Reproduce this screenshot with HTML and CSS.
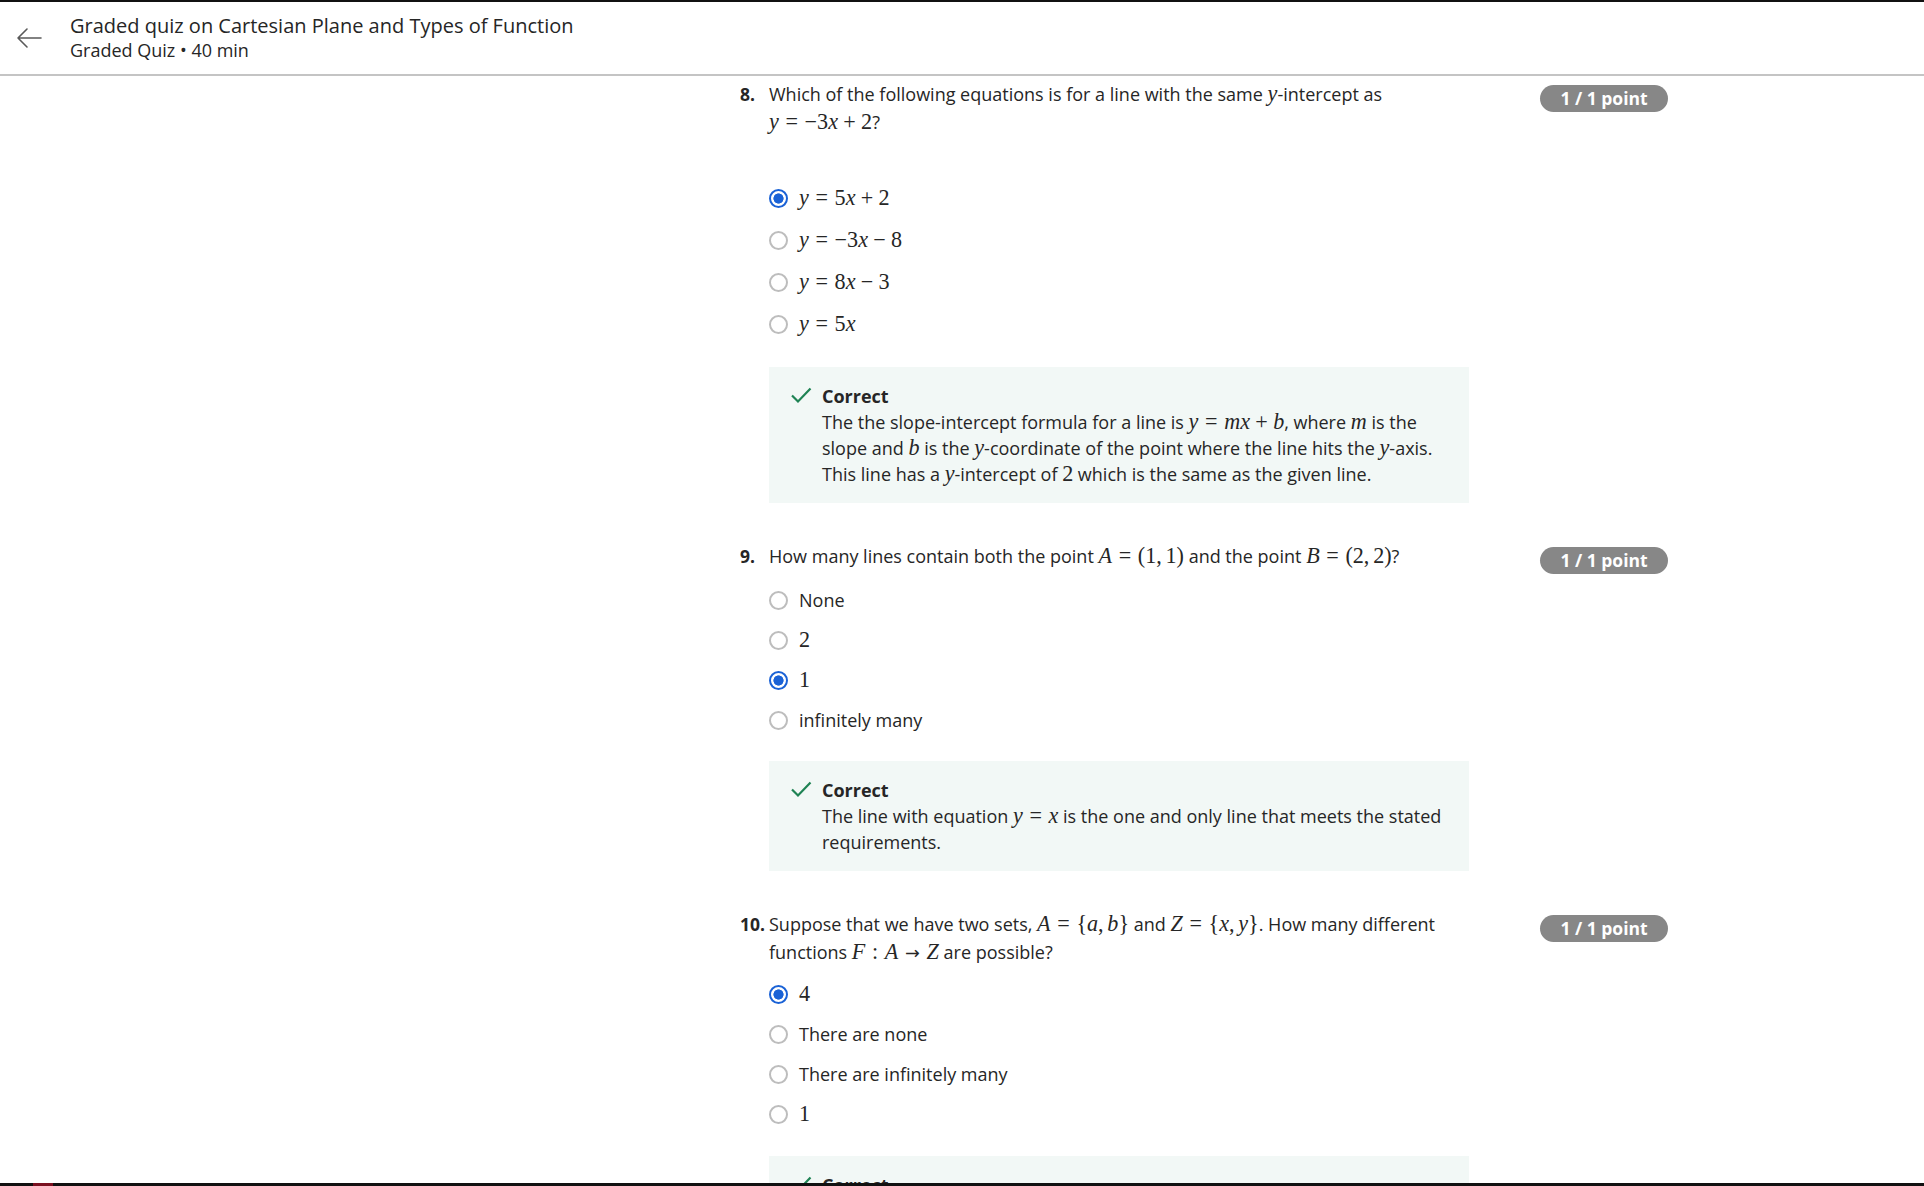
FILE: index.html
```html
<!DOCTYPE html>
<html lang="en">
<head>
<meta charset="utf-8">
<title>Graded quiz on Cartesian Plane and Types of Function</title>
<link rel="stylesheet" href="styles.css">
</head>
<body>
<header class="top">
  <svg class="back" width="26" height="22" viewBox="0 0 26 22" aria-hidden="true">
    <path d="M25 11 H2 M11 2 L2 11 L11 20" fill="none" stroke="#5a5a5a" stroke-width="1.6" stroke-linecap="round" stroke-linejoin="round"/>
  </svg>
  <div class="titles">
    <div class="title">Graded quiz on Cartesian Plane and Types of Function</div>
    <div class="sub">Graded Quiz • 40 min</div>
  </div>
</header>

<main class="quiz">
  <section class="q">
    <div class="q-num">8.</div>
    <div class="q-body">
      <p class="q-text">Which of the following equations is for a line with the same <span class="m"><i>y</i></span>-intercept as <span class="m"><i>y</i><b class="rel">=</b>−3<i>x</i><b class="bin">+</b>2</span>?</p>
      <div class="spacer"></div>
      <ul class="opts">
        <li class="opt tall"><span class="radio on"></span><span class="m"><i>y</i><b class="rel">=</b>5<i>x</i><b class="bin">+</b>2</span></li>
        <li class="opt tall"><span class="radio"></span><span class="m"><i>y</i><b class="rel">=</b>−3<i>x</i><b class="bin">−</b>8</span></li>
        <li class="opt tall"><span class="radio"></span><span class="m"><i>y</i><b class="rel">=</b>8<i>x</i><b class="bin">−</b>3</span></li>
        <li class="opt tall"><span class="radio"></span><span class="m"><i>y</i><b class="rel">=</b>5<i>x</i></span></li>
      </ul>
      <div class="fb">
        <svg class="check" width="22" height="22" viewBox="0 0 22 22" aria-hidden="true"><path d="M2 11.5 L8 17.5 L20.5 4.5" fill="none" stroke="#1f8354" stroke-width="2.2"/></svg>
        <div class="fb-text">
          <div class="fb-title">Correct</div>
          <p>The the slope-intercept formula for a line is <span class="m"><i>y</i><b class="rel">=</b><i>mx</i><b class="bin">+</b><i>b</i></span>, where <span class="m"><i>m</i></span> is the slope and <span class="m"><i>b</i></span> is the <span class="m"><i>y</i></span>-coordinate of the point where the line hits the <span class="m"><i>y</i></span>-axis. This line has a <span class="m"><i>y</i></span>-intercept of <span class="m">2</span> which is the same as the given line.</p>
        </div>
      </div>
    </div>
    <div class="badge">1 / 1 point</div>
  </section>

  <section class="q">
    <div class="q-num">9.</div>
    <div class="q-body">
      <p class="q-text">How many lines contain both the point <span class="m"><i>A</i><b class="rel">=</b>(1,<span class="thin"></span>1)</span> and the point <span class="m"><i>B</i><b class="rel">=</b>(2,<span class="thin"></span>2)</span>?</p>
      <ul class="opts opts-wide">
        <li class="opt"><span class="radio"></span><span>None</span></li>
        <li class="opt"><span class="radio"></span><span class="m">2</span></li>
        <li class="opt"><span class="radio on"></span><span class="m">1</span></li>
        <li class="opt"><span class="radio"></span><span>infinitely many</span></li>
      </ul>
      <div class="fb">
        <svg class="check" width="22" height="22" viewBox="0 0 22 22" aria-hidden="true"><path d="M2 11.5 L8 17.5 L20.5 4.5" fill="none" stroke="#1f8354" stroke-width="2.2"/></svg>
        <div class="fb-text">
          <div class="fb-title">Correct</div>
          <p>The line with equation <span class="m"><i>y</i><b class="rel">=</b><i>x</i></span> is the one and only line that meets the stated requirements.</p>
        </div>
      </div>
    </div>
    <div class="badge">1 / 1 point</div>
  </section>

  <section class="q q-last">
    <div class="q-num">10.</div>
    <div class="q-body">
      <p class="q-text">Suppose that we have two sets, <span class="m"><i>A</i><b class="rel">=</b>{<i>a</i>,<span class="thin"></span><i>b</i>}</span> and <span class="m"><i>Z</i><b class="rel">=</b>{<i>x</i>,<span class="thin"></span><i>y</i>}</span>. How many different functions <span class="m"><i>F</i><b class="rel">:</b><i>A</i><b class="arrow">→</b><i>Z</i></span> are possible?</p>
      <ul class="opts">
        <li class="opt"><span class="radio on"></span><span class="m">4</span></li>
        <li class="opt"><span class="radio"></span><span>There are none</span></li>
        <li class="opt"><span class="radio"></span><span>There are infinitely many</span></li>
        <li class="opt"><span class="radio"></span><span class="m">1</span></li>
      </ul>
      <div class="fb">
        <svg class="check" width="22" height="22" viewBox="0 0 22 22" aria-hidden="true"><path d="M2 11.5 L8 17.5 L20.5 4.5" fill="none" stroke="#1f8354" stroke-width="2.2"/></svg>
        <div class="fb-text">
          <div class="fb-title">Correct</div>
          <p>There are four possible functions from <span class="m"><i>A</i></span> to <span class="m"><i>Z</i></span>.</p>
        </div>
      </div>
    </div>
    <div class="badge">1 / 1 point</div>
  </section>
</main>

<div class="bottom-bar"><span class="progress"></span></div>
</body>
</html>
```
FILE: styles.css
```css
* { box-sizing: border-box; }

html, body {
  margin: 0;
  padding: 0;
  background: #ffffff;
  height: 100%;
  overflow: hidden;
}

body {
  font-family: "Open Sans", "Noto Sans", "Liberation Sans", sans-serif;
  color: #262626;
}

.top {
  display: flex;
  align-items: center;
  gap: 28px;
  height: 76px;
  padding-left: 16px;
  border-top: 2px solid #111111;
  border-bottom: 2px solid #c4c4c4;
}

.back { display: block; }

.titles { line-height: 24px; }

.title { font-size: 20px; color: #262626; }

.sub { font-size: 18px; color: #262626; }

.quiz {
  margin-left: 740px;
  width: 928px;
  padding-top: 4px;
}

.q {
  display: grid;
  grid-template-columns: 29px 700px 1fr 128px;
  margin-bottom: 39px;
}

.q-num {
  font-weight: 700;
  font-size: 17.5px;
  line-height: 28px;
  color: #262626;
}

.q-text {
  margin: 0;
  font-size: 18px;
  line-height: 28px;
}

.spacer { height: 33px; }

.m {
  font-family: "Liberation Serif", "DejaVu Serif", serif;
  font-size: 1.23em;
  line-height: 1;
  white-space: nowrap;
}

.m i { font-style: italic; }

.rel {
  font-weight: 400;
  margin: 0 0.3em;
}

.arrow {
  font-family: "DejaVu Sans", sans-serif;
  font-weight: 400;
  font-size: 0.8em;
  margin: 0 0.38em;
}

.bin {
  font-weight: 400;
  margin: 0 0.24em;
}

.thin { display: inline-block; width: 0.17em; }

.opts {
  list-style: none;
  margin: 8px 0 0;
  padding: 0;
}

.opts-wide { margin-top: 10px; }

.opts-wide + .fb { margin-top: 21px; }

.opt {
  display: flex;
  align-items: center;
  gap: 11px;
  height: 40px;
  font-size: 18px;
}

.opt.tall { height: 42px; }

.radio {
  flex: none;
  width: 19px;
  height: 19px;
  border-radius: 50%;
  border: 2px solid #bdbdbd;
  background: #fff;
}

.radio.on {
  border: 2px solid #1a62d6;
  background: radial-gradient(circle, #1a62d6 0 4.8px, #ffffff 5.4px);
}

.fb {
  display: flex;
  align-items: flex-start;
  gap: 10px;
  margin-top: 22px;
  padding: 16px 20px 16px 21px;
  background: #f2f8f6;
}

.check { flex: none; margin-top: 1px; }

.fb-text {
  font-size: 18px;
  line-height: 26px;
}

.fb-title { font-weight: 700; color: #262626; }

.fb-text p { margin: 0; }

.badge {
  grid-column: 4;
  align-self: start;
  margin-top: 5px;
  height: 27px;
  border-radius: 14px;
  background: #878787;
  color: #ffffff;
  font-weight: 700;
  font-size: 17.5px;
  line-height: 27px;
  text-align: center;
}

.bottom-bar {
  position: fixed;
  left: 0;
  right: 0;
  bottom: 0;
  height: 3px;
  background: #111111;
}

.progress {
  position: absolute;
  left: 33px;
  top: 0;
  width: 20px;
  height: 3px;
  background: #7a1020;
}
```
